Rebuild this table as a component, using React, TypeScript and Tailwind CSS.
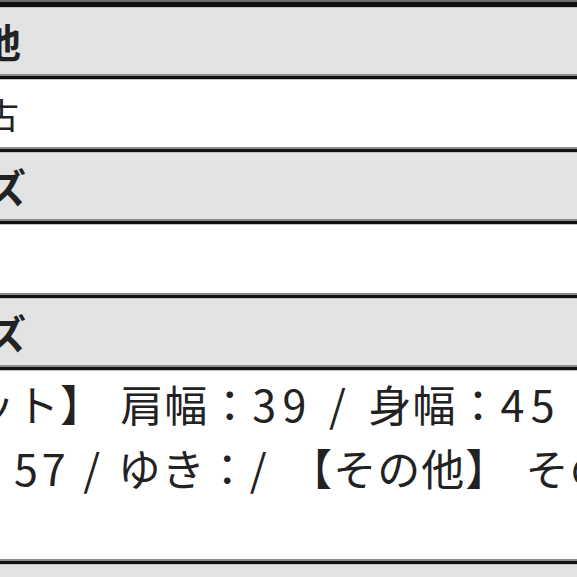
export default function App() {
  const Divider = ({ top = false }: { top?: boolean }) => (
    <div className="flex flex-col">
      <div className={top ? "h-[2px] bg-[#6f6f6f]" : "h-[2px] bg-[#8c8c8c]"} />
      <div className={top ? "h-[5px] bg-[#111]" : "h-[3px] bg-[#111]"} />
      <div className="h-[1px] bg-[#c4c4c4]" />
    </div>
  );

  // half-width parts (digits, slashes, spaces) are set wider in the original
  const A = ({ children, tight = false }: { children: string; tight?: boolean }) => (
    <span className={tight ? "whitespace-pre tracking-[4px]" : "whitespace-pre tracking-[6.5px]"}>
      {children}
    </span>
  );

  return (
    <div
      className="flex h-[577px] w-[577px] flex-col overflow-hidden bg-white text-[#222]"
      style={{ fontFamily: '"Noto Sans CJK JP", "Noto Sans", sans-serif' }}
    >
      <Divider top />
      <div className="flex h-[66px] items-center bg-[#e3e3e3]">
        <span className="ml-[-19px] whitespace-nowrap text-[40px] font-bold leading-none">他</span>
      </div>
      <Divider />
      <div className="flex h-[67px] items-center">
        <span className="ml-[-16px] whitespace-nowrap text-[35px] leading-none">古</span>
      </div>
      <Divider />
      <div className="flex h-[66px] items-center bg-[#e3e3e3]">
        <span className="ml-[-14px] whitespace-nowrap text-[40px] font-bold leading-none">ズ</span>
      </div>
      <Divider />
      <div className="h-[68px]" />
      <Divider />
      <div className="flex h-[66px] items-center bg-[#e3e3e3]">
        <span className="ml-[-14px] whitespace-nowrap text-[40px] font-bold leading-none">ズ</span>
      </div>
      <Divider />
      <div className="flex h-[188px] flex-col text-[43px] leading-[64px] tracking-[1px]">
        <div className="ml-[-28px] whitespace-nowrap">
          ット】<A> </A>肩幅：<A>39 / </A>身幅：<A>45 / </A>着丈：<A>65</A>
        </div>
        <div className="ml-[14px] whitespace-nowrap">
          <A tight>57 / </A>ゆき：<A>/ </A>【その他】<A> </A>その他
        </div>
      </div>
      <Divider />
      <div className="flex-1 bg-[#e3e3e3]" />
    </div>
  );
}
